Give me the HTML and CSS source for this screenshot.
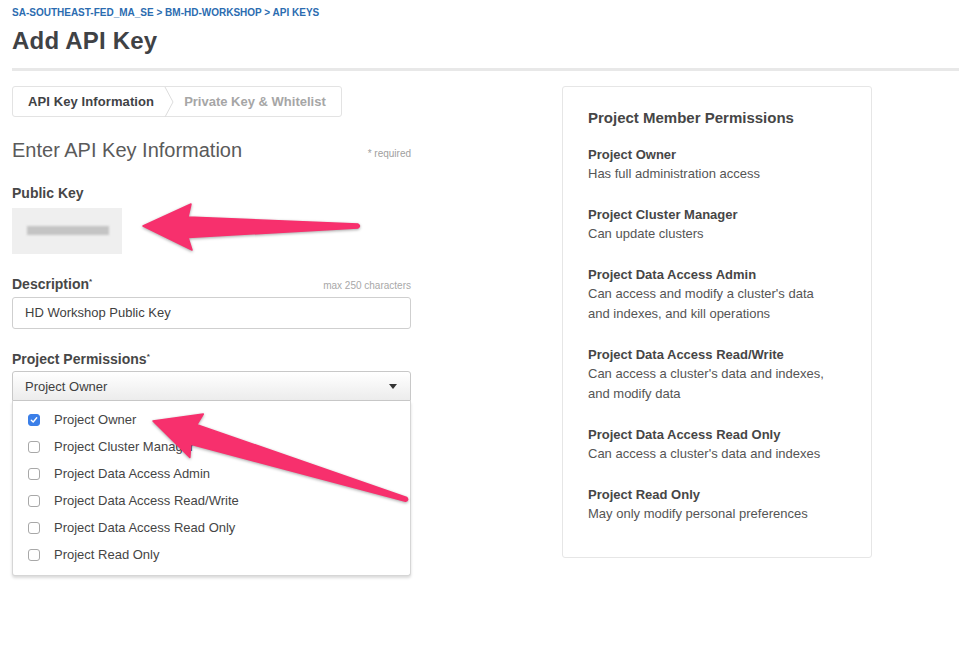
FILE: index.html
```html
<!DOCTYPE html>
<html>
<head>
<meta charset="utf-8">
<link rel="stylesheet" href="styles.css">
</head>
<body>
<div class="page">
  <div class="breadcrumb">SA-SOUTHEAST-FED_MA_SE &gt; BM-HD-WORKSHOP &gt; API KEYS</div>
  <h1 class="title">Add API Key</h1>
  <div class="divider"></div>

  <div class="content">
    <div class="form-col">
      <div class="steps">
        <div class="step active">API Key Information</div>
        <svg class="chev" width="10" height="30" viewBox="0 0 10 30"><path d="M1 0 L9 15 L1 30" fill="none" stroke="#dcdcdc" stroke-width="1"/></svg>
        <div class="step">Private Key &amp; Whitelist</div>
      </div>

      <div class="section-head">
        <div class="section-title">Enter API Key Information</div>
        <div class="required">* required</div>
      </div>

      <div class="label">Public Key</div>
      <div class="keybox"><div class="keyblur"></div></div>

      <div class="field-head">
        <div class="label">Description<sup>*</sup></div>
        <div class="hint">max 250 characters</div>
      </div>
      <div class="input">HD Workshop Public Key</div>

      <div class="label perm-label">Project Permissions<sup>*</sup></div>
      <div class="select">
        <span>Project Owner</span>
        <span class="caret"></span>
      </div>
      <ul class="menu">
        <li><span class="cb checked"><svg width="8" height="8" viewBox="0 0 8 8"><path d="M1.3 4.2 L3.2 6 L6.7 1.8" fill="none" stroke="#fff" stroke-width="1.4" stroke-linecap="round" stroke-linejoin="round"/></svg></span>Project Owner</li>
        <li><span class="cb"></span>Project Cluster Manager</li>
        <li><span class="cb"></span>Project Data Access Admin</li>
        <li><span class="cb"></span>Project Data Access Read/Write</li>
        <li><span class="cb"></span>Project Data Access Read Only</li>
        <li><span class="cb"></span>Project Read Only</li>
      </ul>
    </div>

    <div class="panel">
      <div class="panel-title">Project Member Permissions</div>
      <div class="perm">
        <div class="perm-name">Project Owner</div>
        <div class="perm-desc">Has full administration access</div>
      </div>
      <div class="perm">
        <div class="perm-name">Project Cluster Manager</div>
        <div class="perm-desc">Can update clusters</div>
      </div>
      <div class="perm">
        <div class="perm-name">Project Data Access Admin</div>
        <div class="perm-desc">Can access and modify a cluster's data<br>and indexes, and kill operations</div>
      </div>
      <div class="perm">
        <div class="perm-name">Project Data Access Read/Write</div>
        <div class="perm-desc">Can access a cluster's data and indexes,<br>and modify data</div>
      </div>
      <div class="perm">
        <div class="perm-name">Project Data Access Read Only</div>
        <div class="perm-desc">Can access a cluster's data and indexes</div>
      </div>
      <div class="perm">
        <div class="perm-name">Project Read Only</div>
        <div class="perm-desc">May only modify personal preferences</div>
      </div>
    </div>
  </div>
</div>

<svg class="arrows" width="959" height="662" viewBox="0 0 959 662">
  <g transform="translate(143 226)">
    <path class="arrow" d="M0 0 L48 -22 L45 -9 L215 -2 Q218 0 215 2 L45 11.5 L49 24 Z"/>
  </g>
  <g transform="translate(153 421) rotate(17.2)">
    <path class="arrow" d="M0 0 L46 -21.5 L43 -9.5 L265 -2 Q268 0 265 2 L43 11 L46 24 Z"/>
  </g>
</svg>
</body>
</html>
```

FILE: styles.css
```css
* { box-sizing: border-box; }
html, body { margin: 0; padding: 0; background: #fff; }
body {
  font-family: "Liberation Sans", Arial, sans-serif;
  color: #464646;
  width: 959px;
  height: 662px;
  overflow: hidden;
  position: relative;
}
.page { padding: 7px 0 0 12px; }
.breadcrumb {
  font-size: 10px;
  font-weight: bold;
  color: #2b6cb0;
  line-height: 12px;
}
.title {
  margin: 8px 0 0;
  font-size: 24px;
  font-weight: bold;
  color: #3f4245;
  line-height: 28px;
  letter-spacing: 0.2px;
}
.divider {
  height: 3px;
  background: #e8e8e8;
  margin-top: 13px;
}
.content {
  display: flex;
  gap: 151px;
  margin-top: 15px;
}
.form-col { width: 399px; }
.steps {
  display: flex;
  align-items: center;
  width: 330px;
  height: 31px;
  border: 1px solid #e3e3e3;
  border-radius: 3px;
}
.step {
  font-size: 13px;
  font-weight: bold;
  color: #a6a6a6;
  padding: 0 0 0 15px;
  letter-spacing: 0.1px;
}
.step.active { color: #3f4245; padding-right: 10px; }
.step + .chev + .step { padding-left: 10px; letter-spacing: 0; }
.chev { display: block; }
.section-head {
  display: flex;
  justify-content: space-between;
  align-items: baseline;
  margin-top: 21px;
}
.section-title {
  font-size: 20px;
  color: #5a5a5a;
  font-weight: normal;
  line-height: 24px;
}
.required { font-size: 10px; color: #a0a0a0; }
.label {
  font-size: 14px;
  font-weight: bold;
  color: #474747;
  line-height: 16px;
}
.label sup { font-size: 8px; vertical-align: top; position: relative; top: -2px; }
.section-head + .label { margin-top: 23px; }
.keybox {
  width: 110px;
  height: 46px;
  background: #efefef;
  margin-top: 7px;
  padding: 18px 0 0 15px;
}
.keyblur {
  width: 82px;
  height: 9px;
  background: #c4c4c4;
  filter: blur(1.2px);
}
.field-head {
  display: flex;
  justify-content: space-between;
  align-items: baseline;
  margin-top: 22px;
}
.hint { font-size: 10px; color: #a8a8a8; }
.input {
  margin-top: 5px;
  height: 32px;
  border: 1px solid #cfcfcf;
  border-radius: 3px;
  padding: 0 12px;
  font-size: 13px;
  line-height: 30px;
  color: #3f3f3f;
}
.perm-label { margin-top: 22px; }
.select {
  margin-top: 4px;
  height: 30px;
  border: 1px solid #c8c8c8;
  border-radius: 3px 3px 0 0;
  background: linear-gradient(#ffffff, #ececec);
  padding: 0 12px;
  display: flex;
  justify-content: space-between;
  align-items: center;
  font-size: 13px;
  color: #3f3f3f;
}
.caret {
  width: 0; height: 0;
  border-left: 4.5px solid transparent;
  border-right: 4.5px solid transparent;
  border-top: 5px solid #333;
  margin-right: 1px;
}
.menu {
  list-style: none;
  margin: 0;
  padding: 5px 0 7px;
  width: 399px;
  border: 1px solid #d6d6d6;
  border-top: none;
  border-radius: 0 0 3px 3px;
  box-shadow: 0 2px 3px rgba(0,0,0,0.15);
  background: #fff;
}
.menu li {
  display: flex;
  align-items: center;
  height: 27px;
  padding-left: 15px;
  font-size: 13px;
  color: #454545;
}
.cb {
  width: 12px;
  height: 12px;
  border: 1px solid #a8a8a8;
  border-radius: 3px;
  margin-right: 14px;
  display: flex;
  align-items: center;
  justify-content: center;
  background: #fff;
}
.cb.checked { background: #3b7fe8; border-color: #3b7fe8; }
.panel {
  width: 310px;
  height: 472px;
  border: 1px solid #e6e6e6;
  border-radius: 3px;
  padding: 22px 25px 0;
  margin-top: 0;
}
.panel-title {
  font-size: 15px;
  font-weight: bold;
  color: #464646;
  line-height: 18px;
}
.perm { margin-top: 18px; }
.perm + .perm { margin-top: 21px; }
.perm-name {
  font-size: 13px;
  font-weight: bold;
  color: #464646;
  line-height: 19px;
}
.perm-desc {
  font-size: 13px;
  color: #555;
  line-height: 20px;
}
.arrows {
  position: absolute;
  left: 0;
  top: 0;
  pointer-events: none;
  filter: drop-shadow(0 1px 1.5px rgba(0,0,0,0.35));
}
.arrow { fill: #f7306d; stroke: #f7306d; stroke-width: 1.5; stroke-linejoin: round; }
```
